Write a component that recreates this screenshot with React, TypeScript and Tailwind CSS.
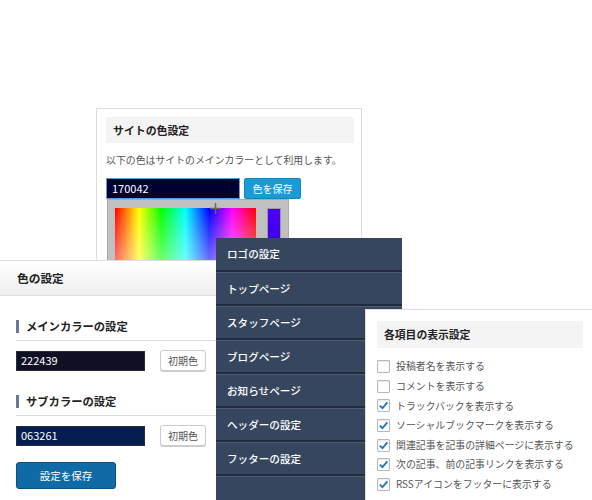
import React from 'react';

const MENU = ['ロゴの設定', 'トップページ', 'スタッフページ', 'ブログページ', 'お知らせページ', 'ヘッダーの設定', 'フッターの設定', ''];

const OPTIONS = [
  { label: '投稿者名を表示する', checked: false },
  { label: 'コメントを表示する', checked: false },
  { label: 'トラックバックを表示する', checked: true },
  { label: 'ソーシャルブックマークを表示する', checked: true },
  { label: '関連記事を記事の詳細ページに表示する', checked: true },
  { label: '次の記事、前の記事リンクを表示する', checked: true },
  { label: 'RSSアイコンをフッターに表示する', checked: true },
];

function Checkbox({ checked }: { checked: boolean }) {
  return (
    <span className="w-[13px] h-[13px] shrink-0 border border-[#b4b9be] bg-white rounded-[1px] shadow-[inset_0_1px_2px_rgba(0,0,0,0.1)] flex items-center justify-center">
      {checked && (
        <svg width="11" height="11" viewBox="0 0 12 12">
          <path d="M2 6.2 L4.8 9 L10.2 2.6" fill="none" stroke="#1e73be" strokeWidth="2" />
        </svg>
      )}
    </span>
  );
}

function SectionTitle({ children }: { children: React.ReactNode }) {
  return (
    <div className="border-b border-[#dddddd] pb-[7px] flex items-center gap-[7px]">
      <span className="w-[3px] h-[13px] bg-[#6a7896]" />
      <span className="text-[11.3px] font-bold text-[#222] leading-none">{children}</span>
    </div>
  );
}

function ColorRow({ value, bg }: { value: string; bg: string }) {
  return (
    <div className="flex items-center mt-[9px]">
      <div className={`w-[129px] h-[20px] ${bg} border border-[#2a2a3a] flex items-center pl-[4px] text-[11px] text-white`}>
        {value}
      </div>
      <button className="ml-[15px] w-[46px] h-[21px] bg-white border border-[#cccccc] rounded-[3px] shadow-[0_1px_0_#ccc] text-[10px] text-[#555]">
        初期色
      </button>
    </div>
  );
}

export default function App() {
  return (
    <div
      className="relative w-[592px] h-[500px] overflow-hidden bg-white"
      style={{ fontFamily: '"Noto Sans CJK JP", "Noto Sans", sans-serif' }}
    >
      {/* サイトの色設定 */}
      <div className="absolute left-[96px] top-[108px] w-[266px] h-[420px] border border-[#dddddd] bg-white pt-[8px] pl-[9px] pr-[7px]">
        <div className="h-[26px] bg-[#f4f4f4] flex items-center pl-[7px] text-[10.9px] font-bold text-[#222]">
          サイトの色設定
        </div>
        <p className="mt-[10px] text-[9.9px] text-[#555] leading-[14px]">以下の色はサイトのメインカラーとして利用します。</p>
        <div className="flex items-center gap-[4px] mt-[11px]">
          <div className="w-[134px] h-[21px] bg-[#000033] border border-[#5b9dd9] flex items-center pl-[5px] text-[11px] text-white">
            170042
          </div>
          <button className="w-[57px] h-[21px] bg-[#1b9bd6] border border-[#1488be] rounded-[2px] text-[10px] text-white">
            色を保存
          </button>
        </div>
        <div className="relative ml-[1px] w-[182px] h-[120px] bg-[#c0c0c0] border border-[#aaaaaa] flex gap-[11px] pt-[8px] pl-[7px]">
          <div
            className="w-[141px] h-[110px]"
            style={{
              background:
                'linear-gradient(to bottom, rgba(255,255,255,0) 0%, rgba(255,255,255,0.9) 100%), linear-gradient(to right, #ff0000 0%, #ffff00 17%, #00ff00 33%, #00ffff 50%, #0000ff 67%, #ff00ff 83%, #ff0000 100%)',
            }}
          />
          <div className="w-[14px] h-[110px] border border-[#999] bg-gradient-to-b from-[#4a00ff] to-[#2a00a0]" />
          <svg className="absolute left-[102px] top-[3px]" width="11" height="11" viewBox="0 0 11 11">
            <path d="M5.5 0 V11 M0 5.5 H11" stroke="#666" strokeWidth="1.5" />
          </svg>
        </div>
      </div>

      {/* 色の設定 */}
      <div className="absolute left-0 top-[260px] w-[230px] h-[260px] bg-white border-t border-[#dddddd]">
        <div className="h-[35px] bg-gradient-to-b from-white to-[#eeeeee] border-b border-[#dddddd] flex items-center pl-[17px] text-[11.7px] font-bold text-[#222]">
          色の設定
        </div>
        <div className="pl-[16px] pt-[24px]">
          <SectionTitle>メインカラーの設定</SectionTitle>
          <ColorRow value="222439" bg="bg-[#0f1024]" />
          <div className="mt-[24px]">
            <SectionTitle>サブカラーの設定</SectionTitle>
          </div>
          <ColorRow value="063261" bg="bg-[#041c4f]" />
          <button className="mt-[16px] w-[100px] h-[27px] bg-[#0f6aa6] border border-[#0b4f80] rounded-[3px] text-[10.5px] text-white">
            設定を保存
          </button>
        </div>
      </div>

      {/* メニュー */}
      <div className="absolute left-[216px] top-[238px] w-[186px] h-[270px] bg-[#36465f]">
        {MENU.map((m, i) => (
          <div
            key={i}
            className={`h-[34px] flex items-center pl-[11px] text-[10.6px] font-medium text-white border-b-2 border-[#222c3d] ${
              i > 0 ? 'border-t border-t-[#4d5c76]' : ''
            }`}
          >
            {m}
          </div>
        ))}
      </div>

      {/* 各項目の表示設定 */}
      <div className="absolute left-[365px] top-[309px] w-[240px] h-[200px] bg-white border border-[#dddddd] pt-[11px] pl-[11px]">
        <div className="w-[206px] h-[27px] bg-[#f4f4f4] flex items-center pl-[7px] text-[10.8px] font-bold text-[#222]">
          各項目の表示設定
        </div>
        <ul className="mt-[9px]">
          {OPTIONS.map((o) => (
            <li key={o.label} className="h-[19.6px] flex items-center gap-[6px] text-[9.9px] text-[#555]">
              <Checkbox checked={o.checked} />
              {o.label}
            </li>
          ))}
        </ul>
      </div>
    </div>
  );
}
